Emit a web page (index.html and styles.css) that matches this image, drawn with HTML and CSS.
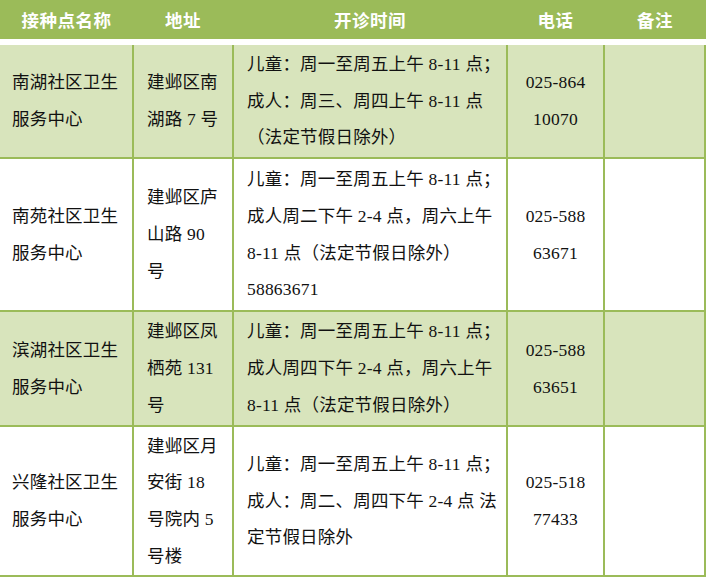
FILE: index.html
```html
<!DOCTYPE html>
<html lang="zh-CN">
<head>
<meta charset="utf-8">
<title>接种点</title>
<link rel="stylesheet" href="styles.css">
</head>
<body>
<div class="sheet">
  <div class="head">
    <div class="hcell">接种点名称</div>
    <div class="hcell">地址</div>
    <div class="hcell">开诊时间</div>
    <div class="hcell">电话</div>
    <div class="hcell">备注</div>
  </div>
  <div class="grid">
    <div class="row alt">
      <div class="cell name">南湖社区卫生<br>服务中心</div>
      <div class="cell addr">建邺区南<br>湖路 7 号</div>
      <div class="cell time">儿童：周一至周五上午 8-11 点；<br>成人：周三、周四上午 8-11 点<br>（法定节假日除外）</div>
      <div class="cell tel">025-864<br>10070</div>
      <div class="cell note"></div>
    </div>
    <div class="row">
      <div class="cell name">南苑社区卫生<br>服务中心</div>
      <div class="cell addr">建邺区庐<br>山路 90<br>号</div>
      <div class="cell time">儿童：周一至周五上午 8-11 点；<br>成人周二下午 2-4 点，周六上午<br>8-11 点（法定节假日除外）<br>58863671</div>
      <div class="cell tel">025-588<br>63671</div>
      <div class="cell note"></div>
    </div>
    <div class="row alt">
      <div class="cell name">滨湖社区卫生<br>服务中心</div>
      <div class="cell addr">建邺区凤<br>栖苑 131<br>号</div>
      <div class="cell time">儿童：周一至周五上午 8-11 点；<br>成人周四下午 2-4 点，周六上午<br>8-11 点（法定节假日除外）</div>
      <div class="cell tel">025-588<br>63651</div>
      <div class="cell note"></div>
    </div>
    <div class="row">
      <div class="cell name">兴隆社区卫生<br>服务中心</div>
      <div class="cell addr">建邺区月<br>安街 18<br>号院内 5<br>号楼</div>
      <div class="cell time">儿童：周一至周五上午 8-11 点；<br>成人：周二、周四下午 2-4 点 法<br>定节假日除外</div>
      <div class="cell tel">025-518<br>77433</div>
      <div class="cell note"></div>
    </div>
  </div>
</div>
</body>
</html>
```

FILE: styles.css
```css
html, body {
  margin: 0;
  padding: 0;
  background: #ffffff;
}

.sheet {
  width: 706px;
  font-family: "Liberation Serif", "Noto Sans CJK SC", serif;
  font-size: 17.5px;
  letter-spacing: 0.2px;
}

.head {
  display: grid;
  grid-template-columns: 133px 100px 274px 97px 102px;
  height: 39px;
  background: #9bbb59;
  color: #ffffff;
}

.hcell {
  display: flex;
  align-items: center;
  justify-content: center;
  font-family: "Noto Sans CJK SC", sans-serif;
  font-weight: 700;
  font-size: 17.5px;
  letter-spacing: 0.5px;
}

.grid {
  margin-top: 6px;
  display: grid;
  grid-template-columns: 132px 98px 272px 95px 99px;
  grid-template-rows: 112px 151px 113px 148px;
  gap: 2px;
  padding: 0 2px 2px 0;
  background: #9bbb59;
}

.row {
  display: contents;
}

.cell {
  display: flex;
  align-items: center;
  background: #ffffff;
  color: #111111;
  line-height: 36.7px;
}

.row.alt > .cell {
  background: #d8e4bc;
}

.name {
  padding-left: 12px;
}

.addr {
  padding-left: 13px;
}

.time {
  padding-left: 13px;
  white-space: nowrap;
}

.tel {
  justify-content: center;
  text-align: center;
}
```
